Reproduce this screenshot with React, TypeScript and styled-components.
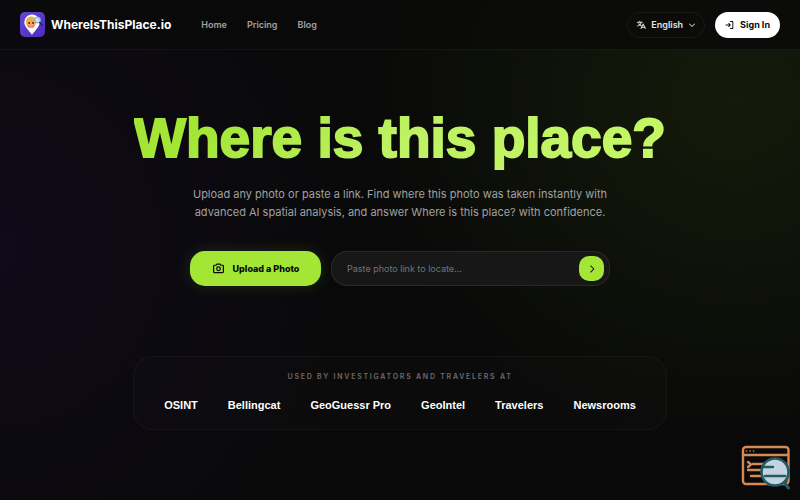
import React from "react";
import styled, { createGlobalStyle } from "styled-components";
import {
  PiTranslateBold,
  PiCaretDownBold,
  PiCaretRightBold,
  PiSignInBold,
  PiCameraBold,
} from "react-icons/pi";

const GlobalStyle = createGlobalStyle`
  *, *::before, *::after { box-sizing: border-box; }
  body {
    margin: 0;
    background: #080808;
    color: #fff;
    font-family: Inter, "Liberation Sans", sans-serif;
  }
  button, input, select { font: inherit; color: inherit; }
`;

const Page = styled.div`
  min-height: 100vh;
  background:
    radial-gradient(ellipse 48% 70% at 92% 20%, rgba(132, 204, 22, 0.09), transparent),
    radial-gradient(ellipse 46% 80% at 0% 50%, rgba(60, 20, 150, 0.11), transparent),
    #090909;
`;

const Header = styled.header`
  display: flex;
  align-items: center;
  justify-content: space-between;
  height: 50px;
  padding: 0 20px;
  background: rgba(10, 10, 10, 0.8);
  border-bottom: 1px solid rgba(255, 255, 255, 0.05);
`;

const Group = styled.div<{ $gap: number }>`
  display: flex;
  align-items: center;
  gap: ${({ $gap }) => $gap}px;
`;

const Brand = styled.a`
  display: flex;
  align-items: center;
  gap: 6px;
  color: #fff;
  font-size: 12px;
  font-weight: 700;
  text-decoration: none;
`;

const Nav = styled.nav`
  display: flex;
  gap: 20px;
`;

const NavLink = styled.a`
  color: #a1a1a1;
  font-size: 9px;
  font-weight: 600;
  text-decoration: none;
`;

const Language = styled.label`
  display: flex;
  align-items: center;
  gap: 5px;
  height: 26px;
  padding: 0 8px;
  border: 1px solid rgba(255, 255, 255, 0.06);
  border-radius: 13px;
  color: #e5e5e5;
`;

const LanguageSelect = styled.select`
  appearance: none;
  field-sizing: content;
  padding: 0;
  border: 0;
  background: transparent;
  color: inherit;
  font-size: 9px;
  font-weight: 600;
`;

const SignIn = styled.button`
  display: flex;
  align-items: center;
  gap: 5px;
  height: 26px;
  padding: 0 10px;
  border: 0;
  border-radius: 13px;
  background: #fff;
  color: #0a0a0a;
  font-size: 9px;
  font-weight: 700;
`;

const Main = styled.main`
  display: flex;
  flex-direction: column;
  align-items: center;
  padding: 56px 20px 60px;
  text-align: center;
`;

const Title = styled.h1`
  margin: 0;
  padding-bottom: 8px;
  background: linear-gradient(135deg, #a3e635 15%, #bef264 50%, #c4f866);
  background-clip: text;
  color: transparent;
  font-family: "Liberation Sans", Arial, sans-serif;
  font-size: 55px;
  font-weight: 800;
  line-height: 64px;
  -webkit-text-stroke: 2px transparent;
`;

const Lead = styled.p`
  max-width: 420px;
  margin: 7px 0 0;
  color: #a1a1a1;
  font-size: 11px;
  line-height: 18px;
`;

const Actions = styled.div`
  display: flex;
  gap: 10px;
  width: 100%;
  max-width: 420px;
  margin-top: 30px;
`;

const UploadButton = styled.button`
  display: flex;
  flex: none;
  align-items: center;
  justify-content: center;
  gap: 8px;
  min-width: 131px;
  height: 35px;
  padding: 0 20px;
  border: 0;
  border-radius: 15px;
  background: #a3e635;
  color: #0a0a0a;
  font-size: 9px;
  font-weight: 800;
  box-shadow: 0 0 16px rgba(163, 230, 53, 0.15);
`;

const LinkForm = styled.form`
  display: flex;
  flex: 1;
  align-items: center;
  min-width: 0;
  height: 35px;
  padding: 0 5px 0 15px;
  border: 1px solid rgba(255, 255, 255, 0.08);
  border-radius: 16px;
  background: #171717;
`;

const LinkInput = styled.input`
  flex: 1;
  min-width: 0;
  padding: 0;
  border: 0;
  outline: 0;
  background: transparent;
  font-size: 9px;
  &::placeholder { color: #737373; opacity: 1; }
`;

const GoButton = styled.button`
  display: grid;
  place-items: center;
  width: 25px;
  height: 25px;
  padding: 0;
  border: 0;
  border-radius: 10px;
  background: #a3e635;
  color: #0a0a0a;
`;

const Trust = styled.section`
  width: 100%;
  max-width: 534px;
  margin-top: 70px;
  padding: 15px 24px;
  border: 1px solid rgba(255, 255, 255, 0.04);
  border-radius: 20px;
  background: rgba(255, 255, 255, 0.01);
`;

const TrustLabel = styled.h2`
  margin: 0;
  color: #6b6b6b;
  font-size: 7px;
  font-weight: 600;
  line-height: 10px;
  letter-spacing: 0.25em;
  text-transform: uppercase;
`;

const Names = styled.ul`
  display: flex;
  flex-wrap: wrap;
  justify-content: center;
  gap: 8px 30px;
  margin: 14px 0 0;
  padding: 0;
  list-style: none;
  font-family: "Liberation Sans", Arial, sans-serif;
  font-size: 11px;
  font-weight: 700;
  line-height: 18px;
`;

const Assistant = styled.button`
  position: fixed;
  right: 10px;
  bottom: 10px;
  padding: 0;
  border: 0;
  background: transparent;
  line-height: 0;
`;

const BrandMark = () => (
  <svg width="25" height="25" viewBox="0 0 25 25" aria-hidden="true">
    <defs>
      <linearGradient id="mark" x2="1" y2="1">
        <stop stopColor="#6748d4" />
        <stop offset="1" stopColor="#4a2bc0" />
      </linearGradient>
    </defs>
    <rect width="25" height="25" rx="5" fill="url(#mark)" />
    <path d="M12 23C10 19.500 4.300 15 4.300 10.300a7.700 7.700 0 0 1 15.400 0c0 4.700-5.700 9.200-7.700 12.700z" fill="#fff" />
    <circle cx="11" cy="10.800" r="5" fill="#f4a261" />
    <path d="M6 10.500C5.500 3 16 2.500 16 10c-2-2.500-5.500-.5-10 .5z" fill="#e9b43b" />
    <path d="M7.500 13q3.500 4 7 0l-1 2.500h-5z" fill="#d9653b" />
    <circle cx="9.200" cy="11" r=".9" fill="#322038" />
    <circle cx="13" cy="11" r=".9" fill="#322038" />
    <circle cx="17.500" cy="8" r="3" fill="#c9dcf8" stroke="#8f9ee0" strokeWidth="1" />
    <path d="M19.800 10.500l2.500 3" stroke="#302354" strokeWidth="1.500" strokeLinecap="round" />
  </svg>
);

const CodeSearch = () => (
  <svg width="49" height="45" viewBox="0 0 49 45" fill="none" aria-hidden="true">
    <g stroke="#d58a56" strokeWidth="2.400" strokeLinecap="round">
      <rect x="2" y="2" width="45.500" height="37" rx="3" />
      <path d="M2 10h45M7 17l3 2.500L7 22M12 19h11M7 25h15M10 31h10" />
      <path d="M5.500 6h.1M9 6h.1M12.500 6h.1" strokeWidth="1.600" />
    </g>
    <path d="M44 38.500l3.500 4.500" stroke="#205d63" strokeWidth="3" strokeLinecap="round" />
    <circle cx="34" cy="27" r="13.500" fill="#c3d3df" stroke="#205d63" strokeWidth="2.600" />
    <path d="M22 22h10M24 31h20" stroke="#205d63" strokeWidth="2.400" strokeLinecap="round" />
  </svg>
);

const links = ["Home", "Pricing", "Blog"];
const names = ["OSINT", "Bellingcat", "GeoGuessr Pro", "GeoIntel", "Travelers", "Newsrooms"];

export default function App() {
  return (
    <Page>
      <GlobalStyle />
      <Header>
        <Group $gap={30}>
          <Brand href="#home">
            <BrandMark />
            WhereIsThisPlace.io
          </Brand>
          <Nav aria-label="Main">
            {links.map((link) => (
              <NavLink key={link} href={`#${link.toLowerCase()}`}>{link}</NavLink>
            ))}
          </Nav>
        </Group>
        <Group $gap={10}>
          <Language>
            <PiTranslateBold size={10} aria-hidden />
            <LanguageSelect aria-label="Language" defaultValue="en">
              <option value="en">English</option>
            </LanguageSelect>
            <PiCaretDownBold size={8} aria-hidden />
          </Language>
          <SignIn type="button">
            <PiSignInBold size={10} aria-hidden />
            Sign In
          </SignIn>
        </Group>
      </Header>
      <Main>
        <Title>Where is this place?</Title>
        <Lead>
          Upload any photo or paste a link. Find where this photo was taken instantly with
          advanced AI spatial analysis, and answer Where is this place? with confidence.
        </Lead>
        <Actions>
          <UploadButton type="button">
            <PiCameraBold size={13} aria-hidden />
            Upload a Photo
          </UploadButton>
          <LinkForm onSubmit={(event) => event.preventDefault()}>
            <LinkInput type="url" aria-label="Photo link" placeholder="Paste photo link to locate..." />
            <GoButton type="submit" aria-label="Locate photo">
              <PiCaretRightBold size={10} aria-hidden />
            </GoButton>
          </LinkForm>
        </Actions>
        <Trust>
          <TrustLabel>Used by investigators and travelers at</TrustLabel>
          <Names>
            {names.map((name) => (
              <li key={name}>{name}</li>
            ))}
          </Names>
        </Trust>
      </Main>
      <Assistant type="button" aria-label="Inspect code">
        <CodeSearch />
      </Assistant>
    </Page>
  );
}
